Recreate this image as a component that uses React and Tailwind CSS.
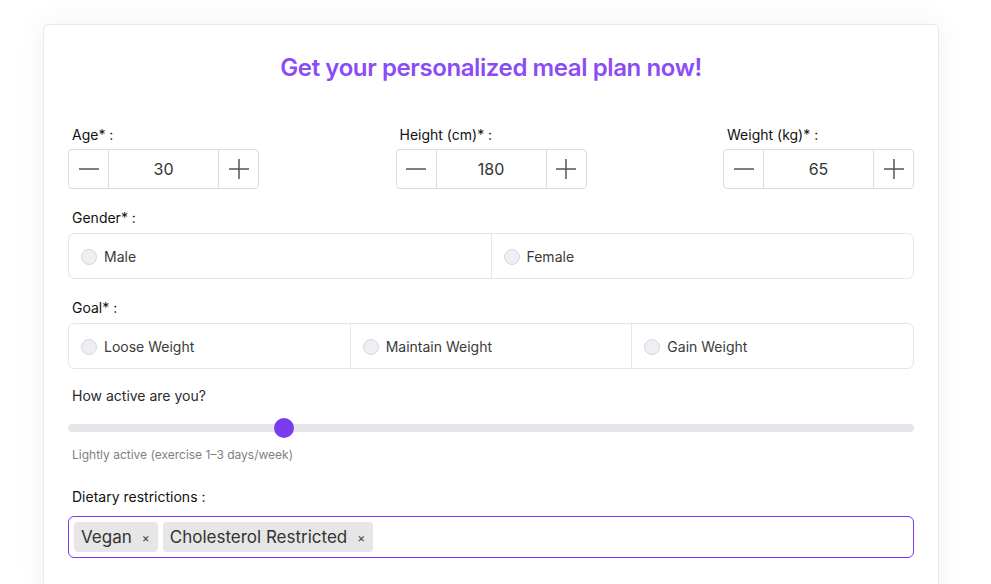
import React from "react";

function Stepper({ label, value }) {
  return (
    <div className="w-[191px]">
      <div className="h-5 pl-1 text-sm leading-5 text-[#111]">{label}</div>
      <div className="mt-1 flex h-10 rounded border border-[#dcdcdc]">
        <button className="flex w-10 items-center justify-center border-r border-[#dcdcdc]">
          <svg width="20" height="20" viewBox="0 0 20 20"><path d="M0 10h20" stroke="#555" strokeWidth="1.5" /></svg>
        </button>
        <div className="flex flex-1 items-center justify-center text-base text-[#333]">{value}</div>
        <button className="flex w-10 items-center justify-center border-l border-[#dcdcdc]">
          <svg width="20" height="20" viewBox="0 0 20 20"><path d="M0 10h20M10 0v20" stroke="#555" strokeWidth="1.5" /></svg>
        </button>
      </div>
    </div>
  );
}

function RadioGroup({ options }) {
  return (
    <div className="flex h-[46px] rounded-md border border-[#e5e5ea]">
      {options.map((o, i) => (
        <label
          key={o}
          className={`flex flex-1 items-center gap-[7px] pl-3 pt-px text-sm text-[#3a3a3a] ${i > 0 ? "border-l border-[#e5e5ea]" : ""}`}
        >
          <span className="h-4 w-4 rounded-full border border-[#d6d6dc] bg-[#eeeef3]" />
          {o}
        </label>
      ))}
    </div>
  );
}

function Tag({ text }) {
  return (
    <span className="flex h-[30px] items-center gap-[10px] rounded bg-[#e6e6e6] pl-[7px] pr-[8px] pt-[2px] text-[17px] text-[#333]">
      {text}
      <span className="text-[12px] text-[#444]">×</span>
    </span>
  );
}

export default function App() {
  return (
    <div className="min-h-[584px] bg-white pt-6 font-['Inter',sans-serif]">
      <div className="ml-[43px] w-[896px] rounded-md border border-[#e8e8ee] bg-white pb-10 pl-6 pr-[24px] pt-[27px] shadow-[0_0_30px_rgba(40,40,80,0.06)]">
        <h1 className="text-center text-2xl font-semibold leading-8 tracking-[-0.4px] text-[#8b4cf6]">
          Get your personalized meal plan now!
        </h1>
        <div className="mt-[41px] flex justify-between">
          <Stepper label="Age* :" value="30" />
          <Stepper label="Height (cm)* :" value="180" />
          <Stepper label="Weight (kg)* :" value="65" />
        </div>
        <div className="mt-[19px] h-5 pl-1 text-sm leading-5 text-[#111]">Gender* :</div>
        <div className="mt-[5px]">
          <RadioGroup options={["Male", "Female"]} />
        </div>
        <div className="mt-[19px] h-5 pl-1 text-sm leading-5 text-[#111]">Goal* :</div>
        <div className="mt-[5px]">
          <RadioGroup options={["Loose Weight", "Maintain Weight", "Gain Weight"]} />
        </div>
        <div className="mt-[17px] h-5 pl-1 text-sm leading-5 text-[#2a2a2a]">How active are you?</div>
        <div className="relative mt-[12px] flex h-5 items-center">
          <div className="h-2 w-full rounded-full bg-[#e5e5ea]" />
          <div className="absolute left-[206px] top-0 h-5 w-5 rounded-full bg-[#7c3aed]" />
        </div>
        <div className="mt-[9px] h-4 pl-1 text-xs leading-4 text-[#808080]">Lightly active (exercise 1–3 days/week)</div>
        <div className="mt-6 h-5 pl-1 text-sm leading-5 text-[#111]">Dietary restrictions :</div>
        <div className="mt-[9px] flex h-[42px] items-center gap-[5px] rounded-md border border-[#7c3aed] px-[5px]">
          <Tag text="Vegan" />
          <Tag text="Cholesterol Restricted" />
        </div>
      </div>
    </div>
  );
}
